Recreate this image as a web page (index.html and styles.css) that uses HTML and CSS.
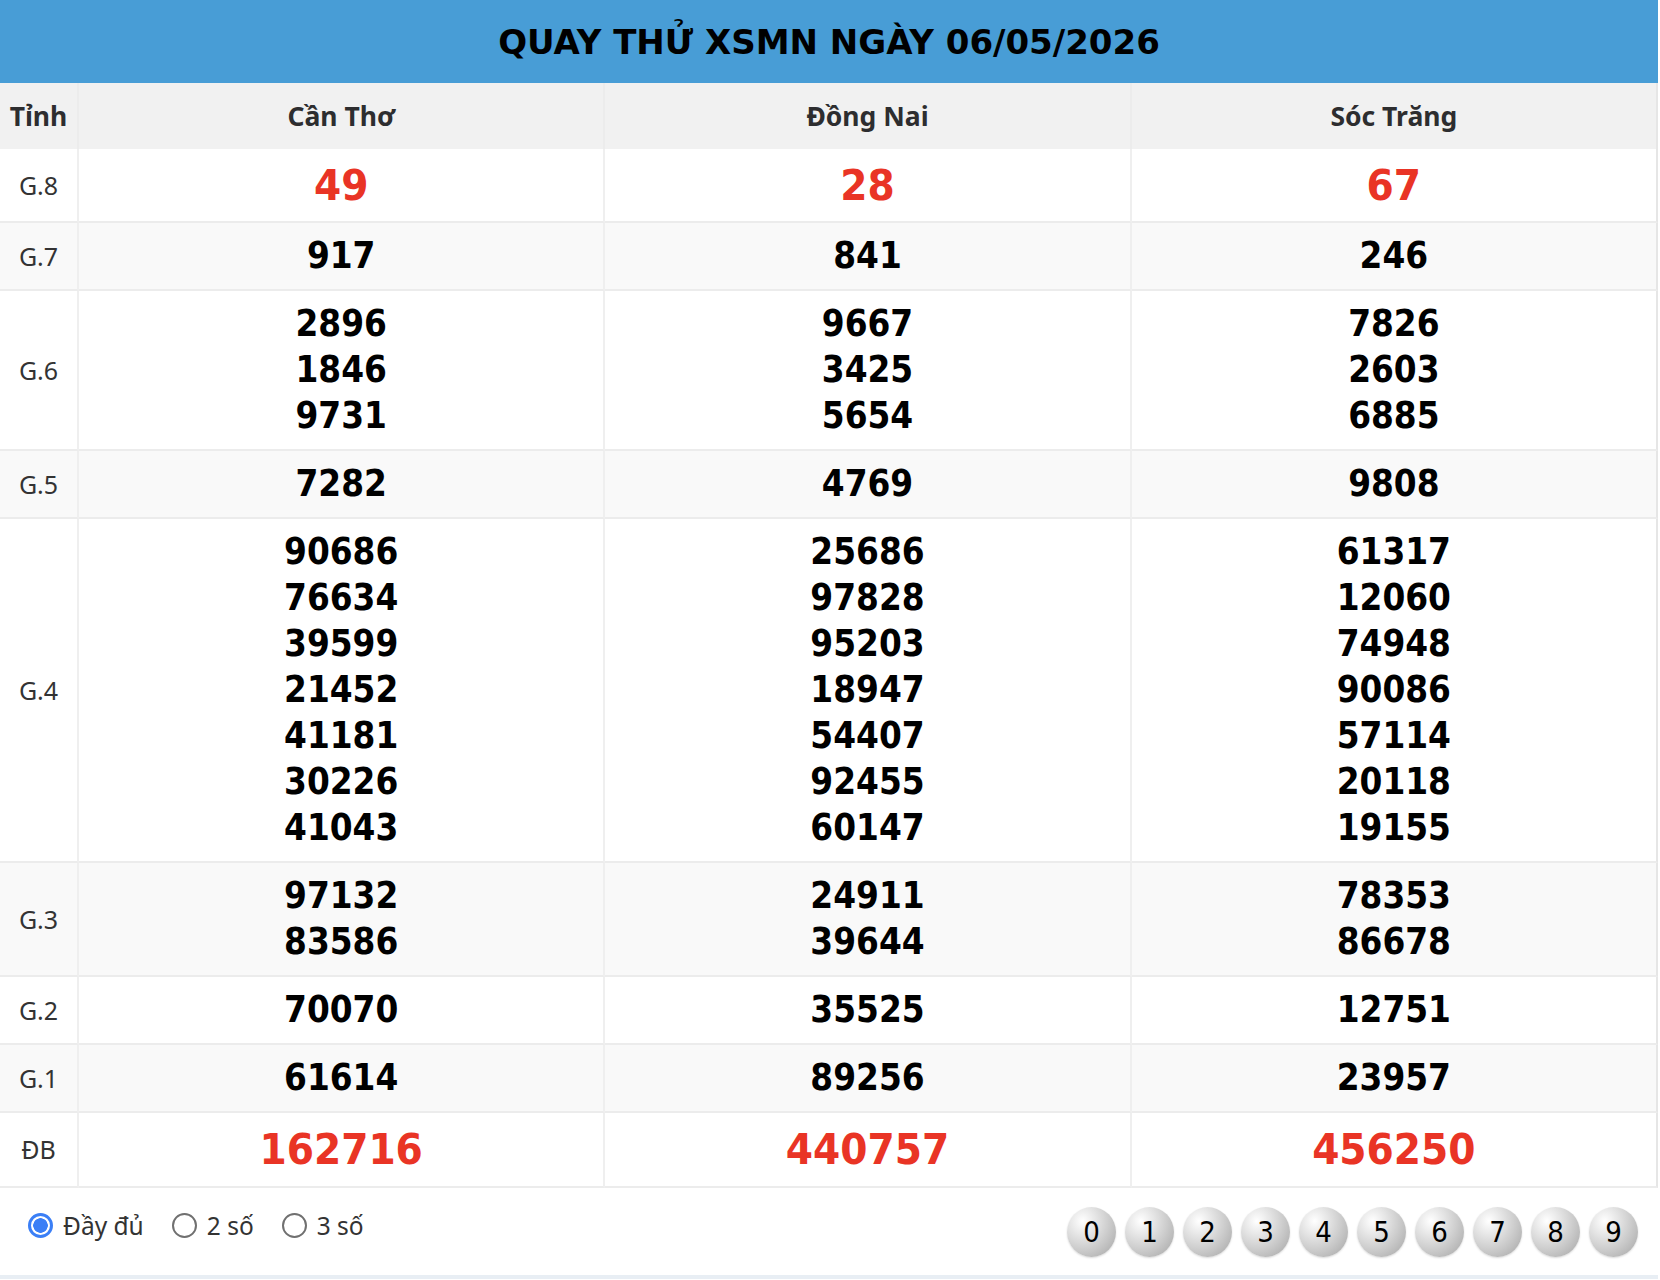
FILE: index.html
```html
<!DOCTYPE html>
<html lang="vi">
<head>
<meta charset="utf-8">
<title>Quay thử XSMN</title>
<link rel="stylesheet" href="styles.css">
</head>
<body>
<div class="box">
  <h1 class="title">QUAY THỬ XSMN NGÀY 06/05/2026</h1>
  <table class="result">
    <thead>
      <tr><th class="lbl">Tỉnh</th><th>Cần Thơ</th><th>Đồng Nai</th><th>Sóc Trăng</th></tr>
    </thead>
    <tbody>
      <tr class="g8"><td class="lbl">G.8</td><td class="red">49</td><td class="red">28</td><td class="red">67</td></tr>
      <tr class="alt"><td class="lbl">G.7</td><td>917</td><td>841</td><td>246</td></tr>
      <tr><td class="lbl">G.6</td><td>2896<br>1846<br>9731</td><td>9667<br>3425<br>5654</td><td>7826<br>2603<br>6885</td></tr>
      <tr class="alt"><td class="lbl">G.5</td><td>7282</td><td>4769</td><td>9808</td></tr>
      <tr><td class="lbl">G.4</td>
        <td>90686<br>76634<br>39599<br>21452<br>41181<br>30226<br>41043</td>
        <td>25686<br>97828<br>95203<br>18947<br>54407<br>92455<br>60147</td>
        <td>61317<br>12060<br>74948<br>90086<br>57114<br>20118<br>19155</td></tr>
      <tr class="alt"><td class="lbl">G.3</td><td>97132<br>83586</td><td>24911<br>39644</td><td>78353<br>86678</td></tr>
      <tr><td class="lbl">G.2</td><td>70070</td><td>35525</td><td>12751</td></tr>
      <tr class="alt"><td class="lbl">G.1</td><td>61614</td><td>89256</td><td>23957</td></tr>
      <tr class="db"><td class="lbl">ĐB</td><td class="red">162716</td><td class="red">440757</td><td class="red">456250</td></tr>
    </tbody>
  </table>
  <div class="footer">
    <div class="modes">
      <label class="mode"><input type="radio" name="mode" checked><span>Đầy đủ</span></label>
      <label class="mode"><input type="radio" name="mode"><span>2 số</span></label>
      <label class="mode"><input type="radio" name="mode"><span>3 số</span></label>
    </div>
    <div class="balls">
      <span class="ball">0</span><span class="ball">1</span><span class="ball">2</span><span class="ball">3</span><span class="ball">4</span><span class="ball">5</span><span class="ball">6</span><span class="ball">7</span><span class="ball">8</span><span class="ball">9</span>
    </div>
  </div>
</div>
</body>
</html>
```

FILE: styles.css
```css
* { box-sizing: border-box; }
html, body { margin: 0; padding: 0; background: #fff; }
body { font-family: "Noto Sans", "DejaVu Sans", sans-serif; color: #333; }

.box { width: 1658px; }

.title {
  margin: 0;
  height: 83px;
  padding-top: 2px;
  background: #489dd6;
  color: #000;
  font-family: "DejaVu Sans", sans-serif;
  font-weight: 700;
  font-size: 34px;
  line-height: 81px;
  text-align: center;
}

.result {
  width: 1658px;
  table-layout: fixed;
  border-collapse: separate;
  border-spacing: 0;
}

.result th {
  background: #f1f1f1;
  padding: 10px 0;
  line-height: 46px;
  font-family: "Noto Sans", sans-serif;
  font-weight: 700;
  font-size: 26.5px;
  color: #2d2d2f;
  border-right: 2px solid #ececec;
  text-align: center;
}
.result th.lbl { width: 79px; }

.result td {
  padding: 10px 0;
  line-height: 46px;
  text-align: center;
  border-bottom: 2px solid #ececec;
  border-right: 2px solid #efefef;
  font-family: "DejaVu Sans Condensed", "DejaVu Sans", sans-serif;
  font-stretch: condensed;
  font-weight: 700;
  font-size: 36.5px;
  color: #000;
}
.result th:last-child, .result td:last-child { border-right: 2px solid #e6e6e6; }

.result td.lbl {
  font-family: "Noto Sans", sans-serif;
  font-stretch: normal;
  font-weight: 400;
  font-size: 25px;
  color: #333;
}

.result tr.alt td { background: #f9f9f9; }
.result tr.g8 td { line-height: 52px; }
.result tr.db td { line-height: 53px; }
.result td.red { color: #e93425; font-size: 43.5px; }

.footer {
  height: 91px;
  padding: 0 20px 0 28px;
  display: flex;
  align-items: center;
  justify-content: space-between;
  border-bottom: 4px solid #e8eef4;
}

.modes { display: flex; align-items: center; gap: 28px; margin-bottom: 12px; }
.mode {
  display: flex;
  align-items: center;
  gap: 10px;
  font-family: "Noto Sans", sans-serif;
  font-size: 24.5px;
  color: #333;
}
.mode input {
  appearance: none;
  -webkit-appearance: none;
  margin: 0;
  width: 25px;
  height: 25px;
  border-radius: 50%;
  border: 2px solid #707070;
  background: #fff;
}
.mode input:checked {
  border: 3px solid #3b7ff6;
  background: radial-gradient(circle, #3b7ff6 0 7px, #fff 7.5px);
}

.balls { display: flex; gap: 9px; }
.ball {
  width: 49px;
  height: 50px;
  border-radius: 50%;
  display: flex;
  align-items: center;
  justify-content: center;
  font-family: "DejaVu Sans Condensed", "DejaVu Sans", sans-serif;
  font-stretch: condensed;
  font-size: 29px;
  color: #000;
  background: radial-gradient(ellipse at 32% 28%, #ffffff 0%, #e4e4e4 30%, #c4c4c4 65%, #a2a2a2 100%);
  box-shadow: 0 1px 2px rgba(0,0,0,0.15);
}
```
